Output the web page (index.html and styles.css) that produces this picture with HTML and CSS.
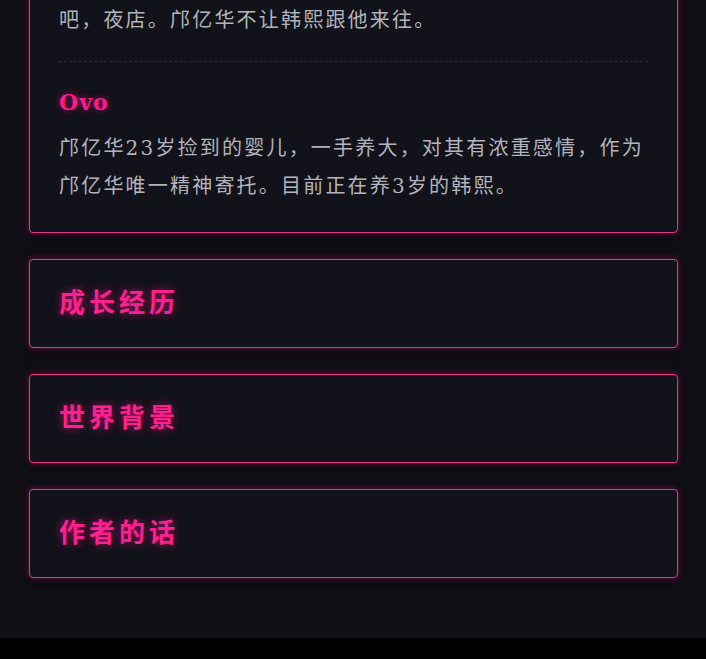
FILE: index.html
```html
<!DOCTYPE html>
<html lang="zh">
<head>
<meta charset="utf-8">
<title>角色档案</title>
<link rel="stylesheet" href="styles.css">
</head>
<body>
<main class="page">
  <section class="card card--cut">
    <p class="desc">吧，夜店。邝亿华不让韩熙跟他来往。</p>
    <div class="entry">
      <h3 class="entry-name">Ovo</h3>
      <p class="desc">邝亿华23岁捡到的婴儿，一手养大，对其有浓重感情，作为邝亿华唯一精神寄托。目前正在养3岁的韩熙。</p>
    </div>
  </section>
  <section class="card">
    <h2 class="card-title">成长经历</h2>
  </section>
  <section class="card">
    <h2 class="card-title">世界背景</h2>
  </section>
  <section class="card">
    <h2 class="card-title">作者的话</h2>
  </section>
</main>
</body>
</html>
```
FILE: styles.css
```css
html, body {
  margin: 0;
  padding: 0;
  background: #000;
}
body {
  font-family: "DejaVu Serif", "Noto Sans CJK SC", serif;
  overflow: hidden;
}
.page {
  background: #0f0f15;
  display: flex;
  flex-direction: column;
  gap: 26px;
  padding: 0 28px 60px 29px;
  min-height: 578px;
}
.card {
  background: #12121a;
  border: 1px solid #e23590;
  border-radius: 4px;
  box-shadow: 0 0 6px rgba(255, 20, 140, 0.45), 0 4px 14px rgba(0, 0, 0, 0.5);
  padding: 27px 29px 32px 29px;
}
.card--cut {
  margin-top: -29px;
  padding-top: 29px;
  padding-bottom: 27px;
}
.card-title {
  margin: 0;
  font-family: "Noto Sans CJK SC", sans-serif;
  font-size: 26px;
  line-height: 28px;
  font-weight: 700;
  letter-spacing: 4px;
  color: #ff1f8f;
  text-shadow: 0 0 8px rgba(255, 20, 140, 0.6);
}
.desc {
  margin: 0;
  font-size: 20px;
  line-height: 38px;
  letter-spacing: 2.2px;
  color: #b4b4bc;
}
.entry {
  margin-top: 22px;
  border-top: 1px dashed #2a2a36;
  padding-top: 25px;
}
.entry-name {
  margin: 0 0 12px;
  font-family: "DejaVu Serif", serif;
  font-size: 22px;
  line-height: 30px;
  font-weight: 700;
  letter-spacing: 1px;
  color: #ff1a8c;
  text-shadow: 0 0 6px rgba(255, 20, 140, 0.55);
}
```
